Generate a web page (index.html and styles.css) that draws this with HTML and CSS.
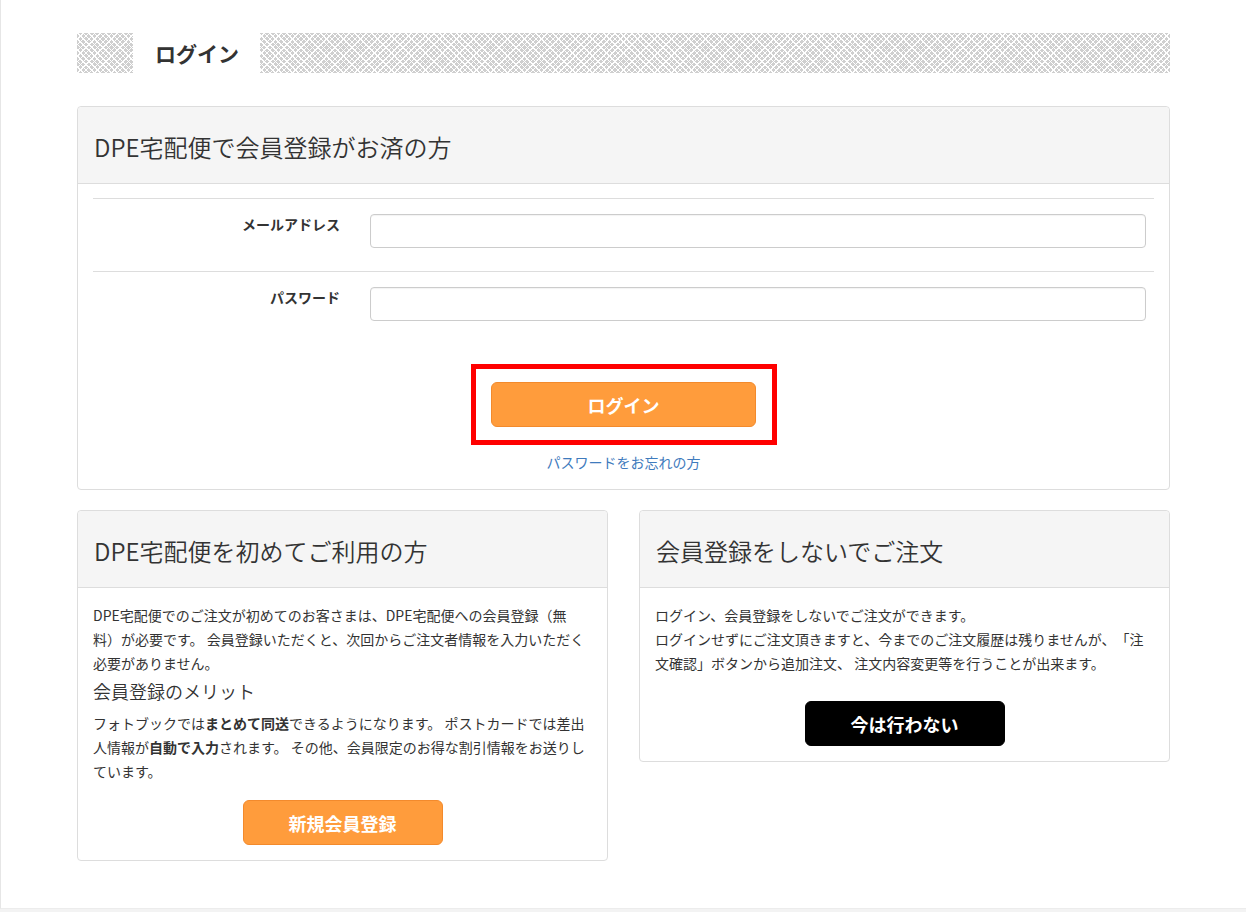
FILE: index.html
```html
<!DOCTYPE html>
<html lang="ja">
<head>
    <meta charset="UTF-8">
    <meta name="viewport" content="width=device-width, initial-scale=1.0">
    <title>ログイン | DPE宅配便</title>
    <link rel="stylesheet" href="styles.css">
</head>
<body>
    <div class="page">
        <div class="container">
            <div class="title-band">
                <h2>ログイン</h2>
            </div>

            <div class="panel login-panel">
                <div class="panel-head">DPE宅配便で会員登録がお済の方</div>
                <div class="panel-body">
                    <form class="login-form" onsubmit="return false;">
                        <div class="form-row">
                            <label for="email">メールアドレス</label>
                            <input type="text" id="email" />
                        </div>
                        <div class="form-row">
                            <label for="password">パスワード</label>
                            <input type="password" id="password" />
                        </div>
                        <div class="highlight">
                            <button type="submit" class="btn btn-orange btn-login">ログイン</button>
                        </div>
                        <p class="forgot"><a href="#">パスワードをお忘れの方</a></p>
                    </form>
                </div>
            </div>

            <div class="columns">
                <div class="panel">
                    <div class="panel-head">DPE宅配便を初めてご利用の方</div>
                    <div class="panel-body">
                        <p>DPE宅配便でのご注文が初めてのお客さまは、DPE宅配便への会員登録（無料）が必要です。 会員登録いただくと、次回からご注文者情報を入力いただく必要がありません。</p>
                        <h3>会員登録のメリット</h3>
                        <p>フォトブックでは<b>まとめて同送</b>できるようになります。 ポストカードでは差出人情報が<b>自動で入力</b>されます。 その他、会員限定のお得な割引情報をお送りしています。</p>
                        <div class="btn-wrap btn-wrap-left">
                            <button type="button" class="btn btn-orange">新規会員登録</button>
                        </div>
                    </div>
                </div>

                <div class="panel">
                    <div class="panel-head">会員登録をしないでご注文</div>
                    <div class="panel-body">
                        <p>ログイン、会員登録をしないでご注文ができます。<br>ログインせずにご注文頂きますと、今までのご注文履歴は残りませんが、「注文確認」ボタンから追加注文、 注文内容変更等を行うことが出来ます。</p>
                        <div class="btn-wrap btn-wrap-right">
                            <button type="button" class="btn btn-black">今は行わない</button>
                        </div>
                    </div>
                </div>
            </div>
        </div>
    </div>
</body>
</html>
```

FILE: styles.css
```css
html {
    background-color: #f3f3f3;
}

body {
    margin: 0;
    padding: 0;
    font-family: "Noto Sans CJK JP", sans-serif;
    color: #333;
    font-size: 14px;
    text-spacing-trim: space-all;
}

.page {
    background-color: #fff;
    border-left: 1px solid #e6e6e6;
    border-bottom: 1px solid #ececec;
    padding: 33px 0 47px;
}

.container {
    width: 1093px;
    margin: 0 auto;
}

.title-band {
    height: 40px;
    background-color: #cfcfcf;
    background-image:
        repeating-linear-gradient(45deg, #fff 0, #fff 1px, transparent 1px, transparent 4px),
        repeating-linear-gradient(-45deg, #fff 0, #fff 1px, transparent 1px, transparent 4px);
    margin-bottom: 33px;
}

.title-band h2 {
    display: inline-block;
    margin: 0 0 0 56px;
    padding: 0 21px 0 22px;
    background-color: #fff;
    font-size: 21px;
    font-weight: bold;
    line-height: 40px;
    height: 40px;
}

.panel {
    border: 1px solid #ddd;
    border-radius: 4px;
    background-color: #fff;
}

.panel-head {
    height: 77px;
    display: flex;
    align-items: center;
    padding: 2px 16px 0;
    box-sizing: border-box;
    background-color: #f5f5f5;
    border-bottom: 1px solid #ddd;
    border-radius: 4px 4px 0 0;
    font-size: 24px;
    font-weight: 350;
}

.panel-body {
    padding: 15px;
}

.login-panel .panel-body {
    padding: 14px 15px 17px;
}

.form-row {
    display: grid;
    grid-template-columns: 277px 1fr;
    align-items: start;
    border-top: 1px solid #ddd;
    padding: 15px 0 23px;
}

.form-row label {
    text-align: right;
    padding-right: 30px;
    font-weight: bold;
    line-height: 20px;
}

.form-row input {
    height: 34px;
    margin-right: 8px;
    box-sizing: border-box;
    border: 1px solid #ccc;
    border-radius: 4px;
    box-shadow: inset 0 1px 1px rgba(0, 0, 0, 0.05);
    padding: 6px 10px;
    font-size: 14px;
}

.highlight {
    width: 306px;
    box-sizing: border-box;
    margin: 20px auto 0;
    border: 5px solid #f00;
    padding: 13px 0;
    display: flex;
    justify-content: center;
}

.btn {
    height: 45px;
    width: 200px;
    border-radius: 6px;
    font-family: "Noto Sans CJK JP", sans-serif;
    font-size: 18px;
    font-weight: bold;
    color: #fff;
    cursor: pointer;
}

.btn-orange {
    background-color: #ff9c3c;
    border: 1px solid #f38a2c;
}

.btn-login {
    width: 265px;
}

.btn-black {
    background-color: #000;
    border: 1px solid #000;
}

.forgot {
    margin: 7px 0 0;
    text-align: center;
    line-height: 20px;
}

.forgot a {
    color: #3f7bbd;
    text-decoration: none;
}

.columns {
    display: grid;
    grid-template-columns: 1fr 1fr;
    column-gap: 31px;
    align-items: start;
    margin-top: 20px;
}

.columns p {
    margin: 0;
    line-height: 24px;
}

.columns h3 {
    margin: 4px 0 8px;
    font-size: 18px;
    font-weight: 350;
    line-height: 24px;
}

.btn-wrap {
    display: flex;
    justify-content: center;
}

.btn-wrap-left {
    margin-top: 17px;
}

.btn-wrap-right {
    margin-top: 26px;
}
```
